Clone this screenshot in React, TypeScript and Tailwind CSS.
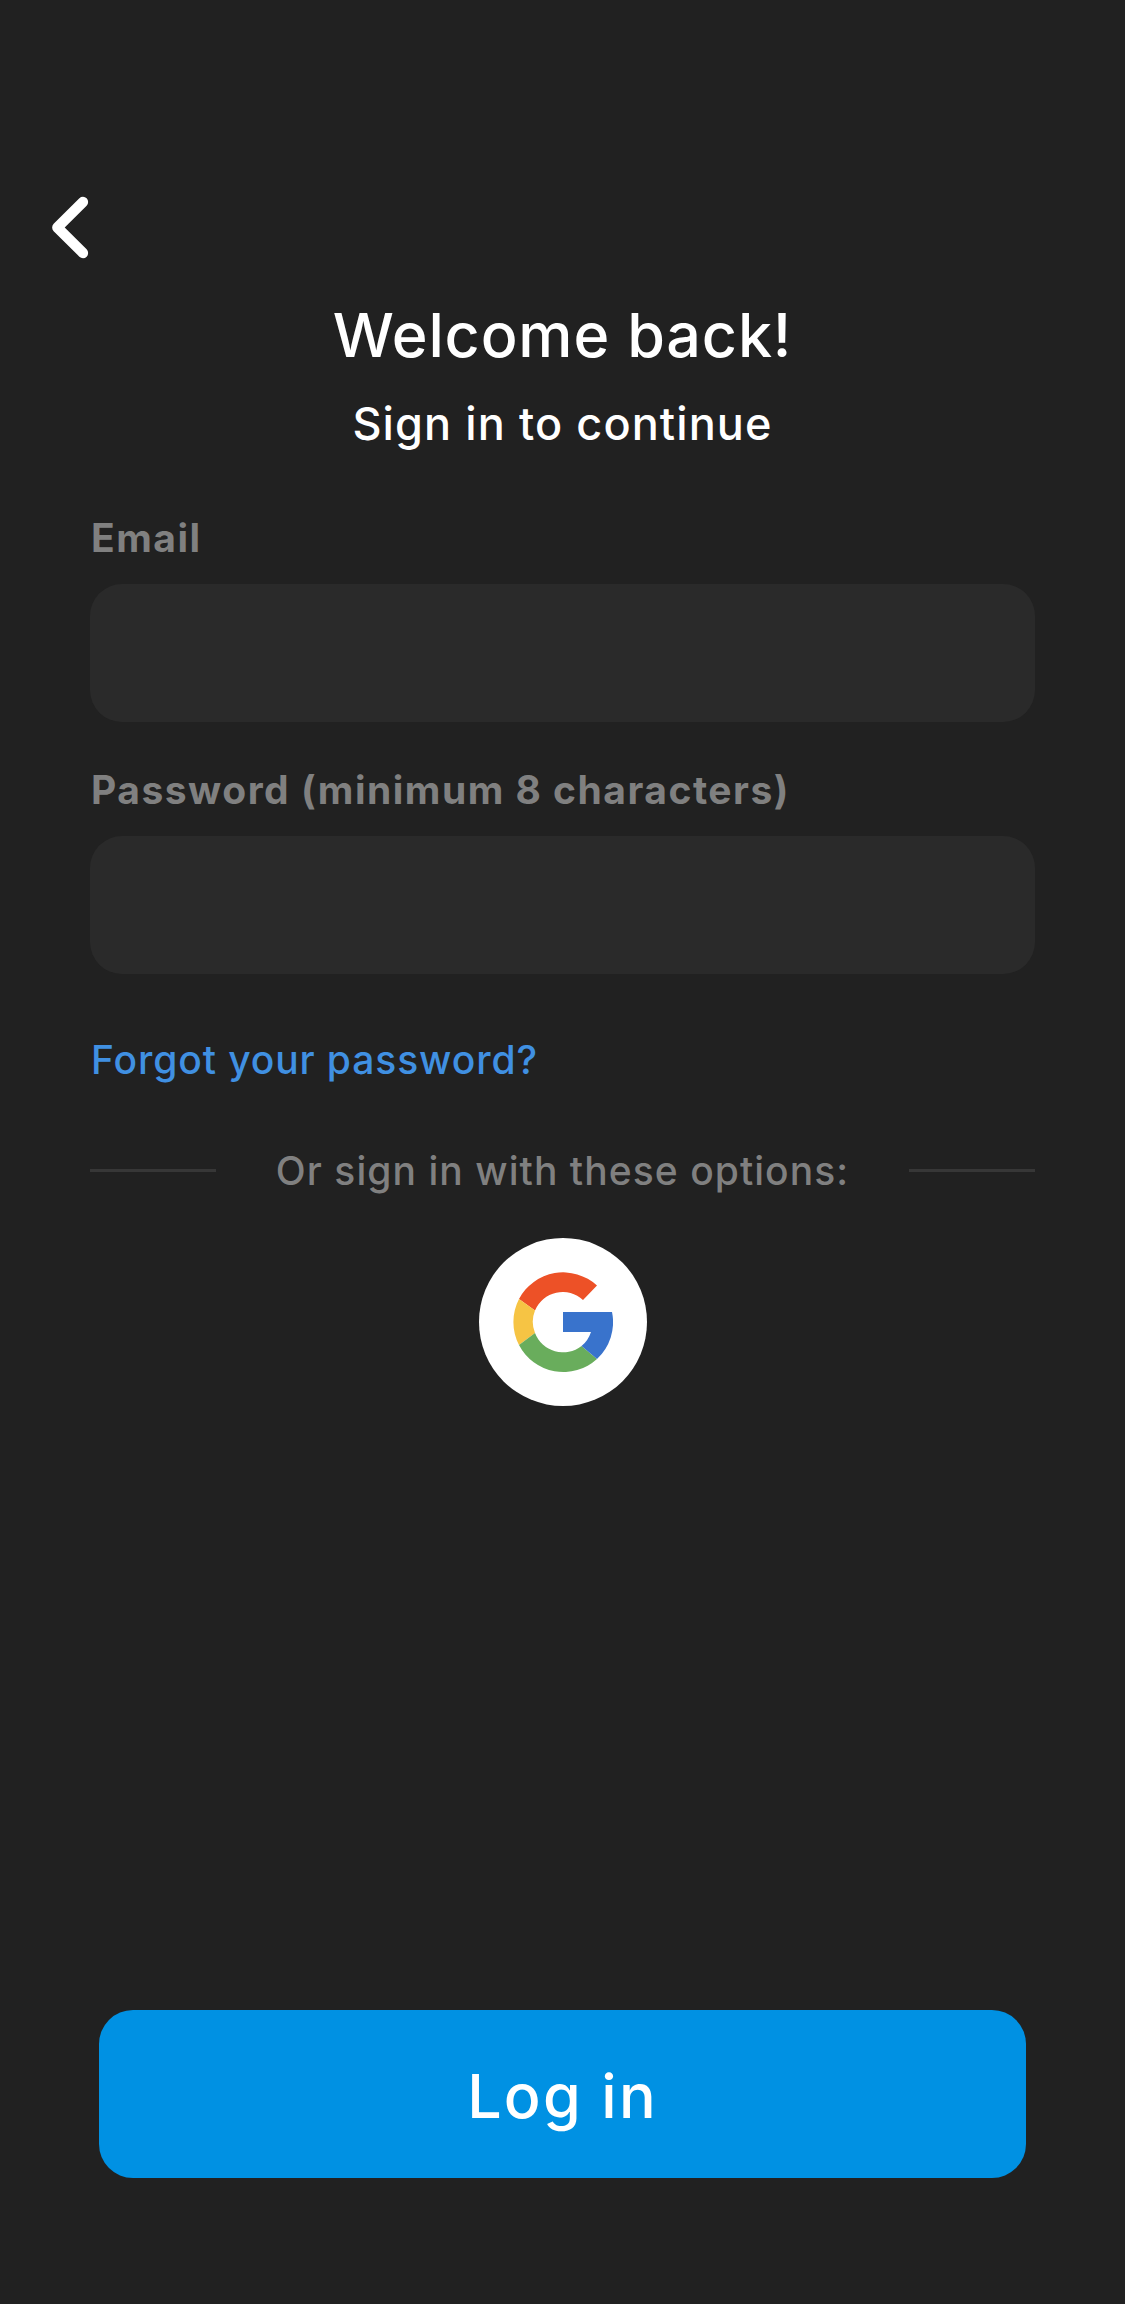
export default function App() {
  return (
    <main className="flex h-[2304px] w-[1125px] flex-col overflow-hidden bg-[#212121] px-[90px] pt-[196px] pb-[126px] font-['Inter',sans-serif] text-white">
      <button type="button" aria-label="Back" className="-ml-[38px] h-[63px] w-[37px]">
        <svg viewBox="0 0 37 63" className="h-full w-full"><path d="M31 6 5.3 31.5 31 57" fill="none" stroke="white" strokeWidth="10.3" strokeLinecap="round" strokeLinejoin="round" /></svg>
      </button>
      <h1 className="mt-[41px] h-[70px] text-center text-[61px] leading-[70px] font-[550] whitespace-nowrap"><span className="tracking-[0.85px]">Welcome back!</span></h1>
      <p className="mt-[26px] h-[56px] text-center text-[45px] leading-[56px] font-[550] whitespace-nowrap"><span className="tracking-[1.1px]">Sign in to continue</span></p>
      <form className="mt-[61px] flex flex-1 flex-col">
        <label htmlFor="email" className="ml-px h-[50px] text-[39px] leading-[50px] font-bold whitespace-nowrap text-[#808080]"><span className="tracking-[1.5px]">Email</span></label>
        <input id="email" type="email" className="mt-[21px] h-[138px] rounded-[32px] bg-[#2a2a2a] px-8 text-[40px]" />
        <label htmlFor="password" className="ml-px mt-[43px] h-[50px] text-[39px] leading-[50px] font-bold whitespace-nowrap text-[#808080]"><span className="tracking-[1.5px]">Password (minimum 8 characters)</span></label>
        <input id="password" type="password" className="mt-[21px] h-[138px] rounded-[32px] bg-[#2a2a2a] px-8 text-[40px]" />
        <a className="ml-px mt-[61px] h-[50px] text-[39px] leading-[50px] font-medium whitespace-nowrap text-[#4090e2]"><span className="tracking-[0.9px]">Forgot your password?</span></a>
        <div className="mt-[61px] flex h-[50px] items-center justify-between">
          <div className="mb-px h-[3px] w-[126px] bg-[#373737]" />
          <span className="text-[39px] leading-[50px] font-medium tracking-[1.05px] text-[#808080]">Or sign in with these options:</span>
          <div className="mb-px h-[3px] w-[126px] bg-[#373737]" />
        </div>
        <button type="button" aria-label="Sign in with Google" className="mt-[42px] ml-px flex size-[168px] items-center justify-center self-center rounded-full bg-white">
          <svg viewBox="0 0 100 100" className="size-[100px]">
            <path fill="#ed5127" d="M6 27A50 50 0 0 1 84 13.5L70 28A30 30 0 0 0 22 38.5Z" />
            <path fill="#f6c444" d="M6 27A50 50 0 0 0 6 73L22 61A30 30 0 0 1 22 38.5Z" />
            <path fill="#69ad5c" d="M6 73A50 50 0 0 0 84 87L68.5 74A30 30 0 0 1 22 61Z" />
            <path fill="#3973cc" d="M50 40H99A50 50 0 0 1 84 87L68.5 74Q75 69 78 60H50Z" />
          </svg>
        </button>
        <button type="button" className="mx-[9px] mt-auto h-[168px] rounded-[34px] bg-[#0091e3] pt-[5px] text-[61px] font-[550]"><span className="tracking-[2.2px]">Log in</span></button>
      </form>
    </main>
  );
}
